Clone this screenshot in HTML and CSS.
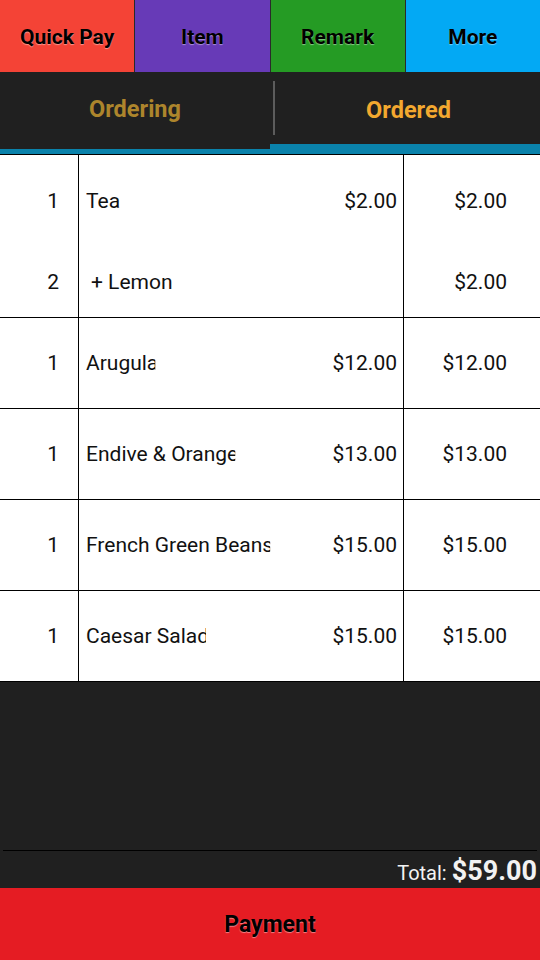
FILE: index.html
```html
<!DOCTYPE html>
<html>
<head>
<meta charset="utf-8">
<link rel="stylesheet" href="styles.css">
</head>
<body>
<div class="app">
  <div class="actions">
    <div class="act act-red">Quick Pay</div>
    <div class="act act-purple">Item</div>
    <div class="act act-green">Remark</div>
    <div class="act act-blue">More</div>
  </div>
  <div class="tabs">
    <div class="tab tab-off"><span class="tab-label">Ordering</span></div>
    <div class="tab tab-on"><span class="tab-div"></span><span class="tab-label">Ordered</span></div>
  </div>
  <div class="table">
    <div class="group">
      <div class="row row-first">
        <div class="c-qty">1</div>
        <div class="c-name"><span class="nm full">Tea</span><span class="pr">$2.00</span></div>
        <div class="c-tot">$2.00</div>
      </div>
      <div class="row row-sub">
        <div class="c-qty">2</div>
        <div class="c-name"><span class="nm sub">+ Lemon</span></div>
        <div class="c-tot">$2.00</div>
      </div>
    </div>
    <div class="group">
      <div class="row">
        <div class="c-qty">1</div>
        <div class="c-name"><span class="nm">Arugula</span><span class="pr">$12.00</span></div>
        <div class="c-tot">$12.00</div>
      </div>
    </div>
    <div class="group">
      <div class="row">
        <div class="c-qty">1</div>
        <div class="c-name"><span class="nm">Endive &amp; Orange</span><span class="pr">$13.00</span></div>
        <div class="c-tot">$13.00</div>
      </div>
    </div>
    <div class="group">
      <div class="row">
        <div class="c-qty">1</div>
        <div class="c-name"><span class="nm">French Green Beans</span><span class="pr">$15.00</span></div>
        <div class="c-tot">$15.00</div>
      </div>
    </div>
    <div class="group">
      <div class="row">
        <div class="c-qty">1</div>
        <div class="c-name"><span class="nm">Caesar Salad</span><span class="pr">$15.00</span></div>
        <div class="c-tot">$15.00</div>
      </div>
    </div>
  </div>
  <div class="filler"></div>
  <div class="total-line"></div>
  <div class="total"><span class="t-lab">Total:</span><span class="t-val">$59.00</span></div>
  <div class="pay">Payment</div>
</div>
</body>
</html>
```

FILE: styles.css
```css
* { box-sizing: border-box; }
html, body { margin: 0; padding: 0; }
body {
  width: 540px;
  height: 960px;
  background: #202020;
  font-family: Roboto, "Noto Sans", sans-serif;
  overflow: hidden;
}
.app {
  display: flex;
  flex-direction: column;
  height: 960px;
}
.actions {
  display: flex;
  height: 72px;
  gap: 1px;
  background: #2a2a2a;
}
.act {
  flex: 1;
  display: flex;
  align-items: center;
  justify-content: center;
  font-size: 21px;
  font-weight: bold;
  color: #000;
  text-shadow: 0 1px 1px rgba(255,255,255,0.45);
  padding-top: 1px;
}
.act-red { background: #f44336; }
.act-purple { background: #673ab7; }
.act-green { background: #259b24; }
.act-blue { background: #03a9f4; }
.tabs {
  display: flex;
  align-items: flex-start;
  height: 82px;
  background: #0a82ab;
}
.tab {
  width: 270px;
  display: flex;
  align-items: center;
  background: #202020;
  font-size: 23.5px;
  font-weight: bold;
}
.tab-label {
  flex: 1;
  text-align: center;
}
.tab-off {
  color: #ad852c;
  height: 77px;
  padding-bottom: 3px;
}
.tab-on {
  color: #f3a82f;
  height: 72px;
  padding-left: 3px;
}
.tab-on .tab-label { padding-top: 3px; }
.tab-div {
  width: 2px;
  height: 54px;
  background: #5c5c5c;
  margin-right: 2px;
}
.table {
  background: #fff;
  border-top: 1px solid #000;
}
.group {
  border-bottom: 1px solid #000;
}
.row {
  display: grid;
  grid-template-columns: 78px 326px 136px;
  height: 90px;
  font-size: 21px;
  color: #111;
}
.row-first { height: 91px; }
.row-sub { height: 71px; }
.c-qty {
  display: flex;
  align-items: center;
  justify-content: flex-end;
  padding-right: 19px;
}
.c-name {
  border-left: 1px solid #000;
  border-right: 1px solid #000;
  display: flex;
  align-items: center;
  justify-content: space-between;
  padding: 0 6px 0 7px;
}
.nm {
  white-space: nowrap;
  clip-path: inset(0 3px 0 0);
}
.nm.full { clip-path: none; }
.nm.sub { padding-left: 5px; clip-path: none; }
.c-tot {
  display: flex;
  align-items: center;
  justify-content: flex-end;
  padding-right: 33px;
}
.filler { flex: 1; }
.total-line {
  height: 1px;
  background: #000;
  margin: 0 3px;
}
.total {
  height: 37px;
  display: flex;
  justify-content: flex-end;
  align-items: baseline;
  padding: 4px 3px 0 0;
  color: #f2f2f2;
}
.t-lab { font-size: 20px; margin-right: 5px; }
.t-val { font-size: 27px; font-weight: bold; }
.pay {
  height: 72px;
  background: #e51c23;
  display: flex;
  align-items: center;
  justify-content: center;
  font-size: 23px;
  font-weight: bold;
  color: #000;
  text-shadow: 0 1px 1px rgba(255,255,255,0.45);
}
```
